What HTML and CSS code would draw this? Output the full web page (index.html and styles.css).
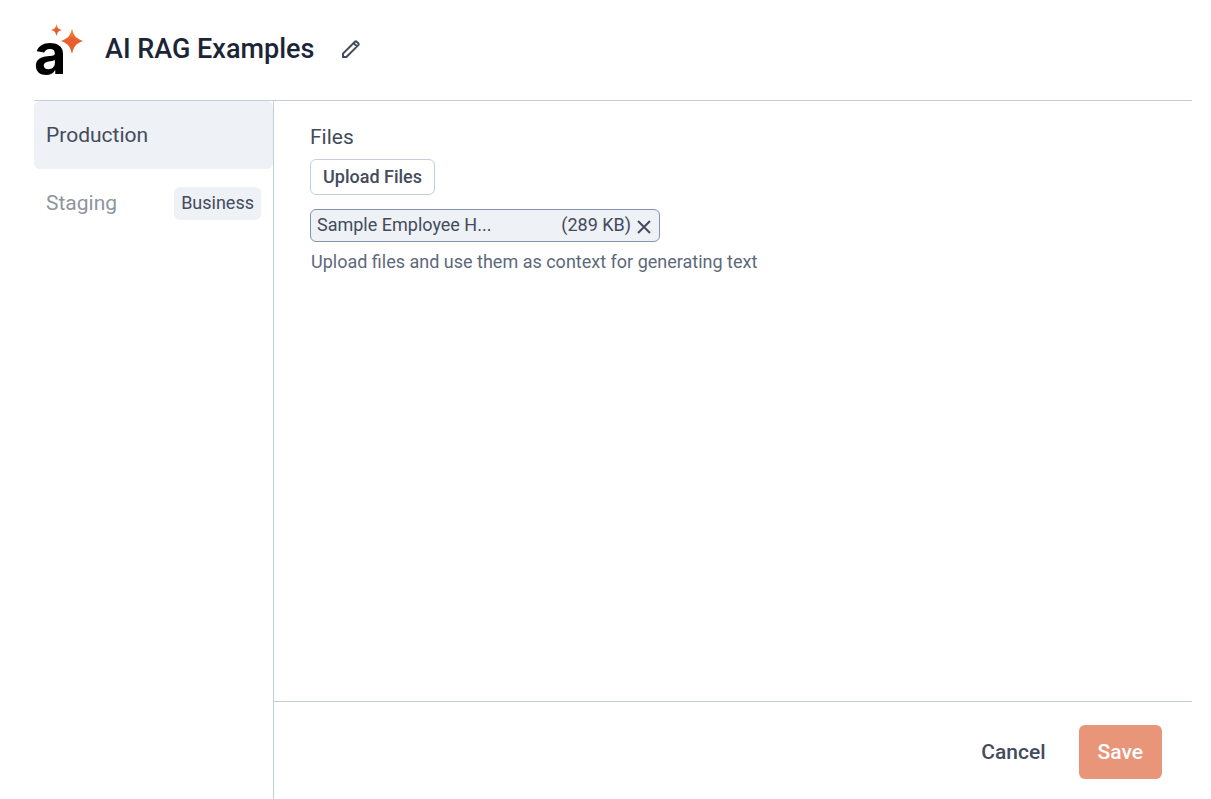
FILE: index.html
```html
<!DOCTYPE html>
<html lang="en">
<head>
<meta charset="utf-8">
<meta name="viewport" content="width=device-width, initial-scale=1">
<title>AI RAG Examples</title>
<link rel="stylesheet" href="styles.css">
</head>
<body>
<div class="page">
  <header class="header">
    <svg class="logo" viewBox="0 0 50 54" role="img" aria-label="AI app">
      <defs>
        <linearGradient id="spark" x1="0" y1="0" x2="0" y2="1">
          <stop offset="0" stop-color="#f79a45"/>
          <stop offset="0.4" stop-color="#e8602f"/>
          <stop offset="1" stop-color="#e8582c"/>
        </linearGradient>
      </defs>
      <text class="logo-letter" x="0" y="50">a</text>
      <path fill="url(#spark)" d="M38 4.500C40 12 41.500 14 49 17C41.500 20 40 22 38 30C36 22 34.500 20 27 17C34.500 14 36 12 38 4.500Z"/>
      <path fill="url(#spark)" d="M22.500 0C23.500 4 24.200 5 28 6C24.200 7 23.500 8 22.500 12C21.500 8 20.800 7 17 6C20.800 5 21.500 4 22.500 0Z"/>
    </svg>
    <h1 class="title">AI RAG Examples</h1>
    <button class="icon-button" type="button" aria-label="Edit name">
      <svg class="pencil" viewBox="0 0 18 18" aria-hidden="true">
        <path d="M1 17V13.600L12.900 1.700Q13.800 0.900 14.700 1.700L16.300 3.300Q17.100 4.200 16.300 5.100L4.400 17ZM11.600 3L15 6.400"/>
      </svg>
    </button>
  </header>
  <div class="body">
    <nav class="sidebar" aria-label="Environments">
      <a class="tab tab-active" href="#production" aria-current="page">Production</a>
      <a class="tab tab-disabled" href="#staging">Staging <span class="badge">Business</span></a>
    </nav>
    <div class="panel">
      <main class="content">
        <h2 class="label">Files</h2>
        <button class="upload" type="button">Upload Files</button>
        <div class="file">
          <span class="file-name">Sample Employee H...</span>
          <span class="file-size">(289 KB)</span>
          <button class="remove" type="button" aria-label="Remove file">
            <svg class="cross" viewBox="0 0 14 14" aria-hidden="true"><path d="M1 1L13 13M13 1L1 13"/></svg>
          </button>
        </div>
        <p class="hint">Upload files and use them as context for generating text</p>
      </main>
      <footer class="footer">
        <button class="action cancel" type="button">Cancel</button>
        <button class="action save" type="button">Save</button>
      </footer>
    </div>
  </div>
</div>
</body>
</html>
```
FILE: styles.css
```css
* {
  box-sizing: border-box;
}

body {
  margin: 0;
  background: #fff;
  color: #434b5c;
  font-family: Roboto, "Liberation Sans", sans-serif;
}

button {
  font: inherit;
  color: inherit;
  cursor: pointer;
}

.page {
  display: flex;
  flex-direction: column;
  min-height: 100vh;
  padding: 0 19px 0 34px;
}

.header {
  display: flex;
  align-items: center;
  padding: 24px 0 22px;
  border-bottom: 1px solid #c4cedb;
}

.logo {
  width: 50px;
  height: 54px;
  overflow: visible;
}

.logo-letter {
  font: bold 56px Inter, "Liberation Sans", sans-serif;
  fill: #000;
}

.title {
  margin: 0 0 4px 21px;
  font-size: 27px;
  font-weight: 500;
  line-height: 36px;
  color: #1c2536;
}

.icon-button {
  display: flex;
  margin: 0 0 4px 20px;
  padding: 8px;
  border: 0;
  background: none;
}

.pencil {
  width: 18px;
  height: 18px;
  fill: none;
  stroke: #434b5c;
  stroke-width: 2;
}

.body {
  display: flex;
  flex: 1;
}

.sidebar {
  flex: 0 0 240px;
  border-right: 1px solid #c4cedb;
}

.tab {
  display: flex;
  align-items: center;
  justify-content: space-between;
  height: 68px;
  padding: 0 12px;
  border-radius: 6px;
  font-size: 21px;
  color: #434b5c;
  text-decoration: none;
}

.tab-active {
  background: #eef1f6;
}

.tab-disabled {
  color: #8f959e;
}

.badge {
  padding: 4px 7px 5px;
  border-radius: 6px;
  background: #eef1f6;
  font-size: 18px;
  line-height: 24px;
  color: #434b5c;
}

.panel {
  display: flex;
  flex: 1;
  flex-direction: column;
}

.content {
  display: flex;
  flex: 1;
  flex-direction: column;
  align-items: flex-start;
  padding: 24px 36px;
}

.label {
  margin: 0 0 10px;
  font-size: 21px;
  font-weight: 400;
  line-height: 24px;
}

.upload {
  height: 36px;
  padding: 0 12px 2px;
  border: 1px solid #c4cedb;
  border-radius: 6px;
  background: #fff;
  font-size: 18px;
  font-weight: 500;
}

.file {
  display: flex;
  align-items: center;
  width: 350px;
  max-width: 100%;
  margin: 14px 0 8px;
  padding: 3px 8px 4px 6px;
  border: 1px solid #8493ad;
  border-radius: 6px;
  background: #eef1f6;
  font-size: 18px;
  line-height: 24px;
}

.file-name {
  flex: 1;
}

.remove {
  display: flex;
  margin: 3px 0 0 6px;
  padding: 0;
  border: 0;
  background: none;
}

.cross {
  width: 14px;
  height: 14px;
  fill: none;
  stroke: #434b5c;
  stroke-width: 2;
}

.hint {
  margin: 0 1px;
  font-size: 18px;
  line-height: 24px;
  color: #5d697b;
}

.footer {
  display: flex;
  justify-content: flex-end;
  gap: 14px;
  padding: 23px 30px 20px;
  border-top: 1px solid #c4cedb;
}

.action {
  height: 54px;
  padding: 0 19px;
  border: 0;
  border-radius: 6px;
  background: none;
  font-size: 21px;
  font-weight: 500;
}

.save {
  background: #e99579;
  color: #fff;
}
```
